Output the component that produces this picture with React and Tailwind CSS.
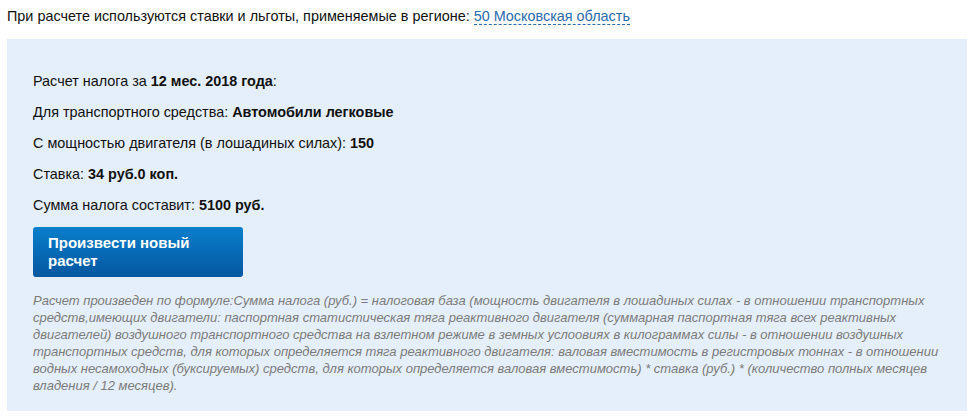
import React from "react";

const rows = [
  { label: "Расчет налога за ", value: "12 мес. 2018 года", tail: ":" },
  { label: "Для транспортного средства: ", value: "Автомобили легковые" },
  { label: "С мощностью двигателя (в лошадиных силах): ", value: "150" },
  { label: "Ставка: ", value: "34 руб.0 коп." },
  { label: "Сумма налога составит: ", value: "5100 руб." },
];

const App = () => {
  return (
    <div className="bg-white min-h-[419px] font-['Liberation_Sans',Arial,sans-serif] text-[14.4px] text-[#111]">
      {/* region line */}
      <div className="pl-[7px] pt-[7px] leading-[18px]">
        При расчете используются ставки и льготы, применяемые в регионе:{" "}
        <a
          href="#"
          className="text-[#2a6aad] border-b border-dashed border-[#2a6aad] no-underline"
        >
          50 Московская область
        </a>
      </div>

      {/* result box */}
      <div className="ml-[7px] mt-[14px] bg-[#e5effb] pl-[26px] pr-[26px] pt-[33px] pb-[17px]">
        <div className="flex flex-col gap-[13px]">
          {rows.map((r, i) => (
            <p key={i} className="leading-[18px]">
              {r.label}
              <b className="font-bold">{r.value}</b>
              {r.tail}
            </p>
          ))}
        </div>

        <button className="mt-[13px] w-[210px] h-[50px] rounded-[3px] bg-gradient-to-b from-[#0a7fcc] to-[#0557a0] text-white font-bold text-[15px] text-left pl-[15px] pr-[40px] leading-[18px]">
          Произвести новый
          <br />
          расчет
        </button>

        <p className="mt-[15px] italic text-[13px] leading-[17px] text-[#7b7b7b]">
          Расчет произведен по формуле:Сумма налога (руб.) = налоговая база
          (мощность двигателя в лошадиных силах - в отношении транспортных
          средств,имеющих двигатели: паспортная статистическая тяга реактивного
          двигателя (суммарная паспортная тяга всех реактивных двигателей)
          воздушного транспортного средства на взлетном режиме в земных
          услоовиях в килограммах силы - в отношении воздушных транспортных
          средств, для которых определяется тяга реактивного двигателя: валовая
          вместимость в регистровых тоннах - в отношении водных несамоходных
          (буксируемых) средств, для которых определяется валовая вместимость) *
          ставка (руб.) * (количество полных месяцев владения / 12 месяцев).
        </p>
      </div>
    </div>
  );
};

export default App;
